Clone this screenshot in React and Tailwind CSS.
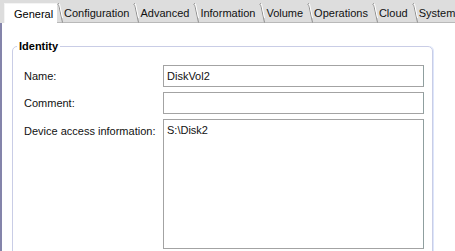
const TABS = ['Configuration', 'Advanced', 'Information', 'Volume', 'Operations', 'Cloud', 'System'];

function TabEdge() {
  return (
    <svg width="6" height="20" viewBox="0 0 6 20" className="shrink-0">
      <path d="M0.5 1.5 L1.5 0.5 L5.5 19.5" fill="none" stroke="#8c8c8c" strokeWidth="1" />
      <path d="M1.5 1.5 L2.5 1 L5.5 15" fill="none" stroke="#ffffff" strokeWidth="1" />
    </svg>
  );
}

function Field({ label, value, tall }) {
  return (
    <div className="flex items-start">
      <div className={`w-[139px] shrink-0 ${tall ? 'pt-[5px]' : 'pt-[4px]'}`}>{label}</div>
      <div
        className={`w-[261px] border border-[#a3a3a3] border-r-[#8f9f9f] bg-white px-[3px] pt-[3px] ${tall ? 'h-[130px]' : 'h-[22px]'}`}
      >
        {value}
      </div>
    </div>
  );
}

export default function App() {
  return (
    <div className="w-[455px] h-[251px] overflow-hidden bg-white text-[11px] leading-[14px] text-[#111] font-['Liberation_Sans',Arial,sans-serif]">
      {/* Tab strip */}
      <div className="h-[23px] bg-[#dddddd] flex items-end pl-[4px]">
        <div className="h-[20px] w-[53px] shrink-0 bg-white border-l border-t border-[#f4f4f4] flex items-center pl-[9px] text-black">
          General
        </div>
        {TABS.map((t) => (
          <div key={t} className="h-[20px] shrink-0 flex items-start border-b border-[#b9b9b9]">
            <TabEdge />
            <span className="pt-[3px] pl-[1px] pr-[4px] whitespace-nowrap">{t}</span>
          </div>
        ))}
      </div>

      {/* Page */}
      <div className="h-[228px] border-l-2 border-[#8484aa] pl-[10px] pr-[22px] pt-[16px]">
        <fieldset className="h-[240px] border border-[#c9cde6] rounded-[5px] pl-[11px] pt-[12px] shadow-[1px_0_0_#dde6fb]">
          <legend className="font-bold ml-[-7px] pl-[2px] pr-[2px] text-black">Identity</legend>
          <div className="flex flex-col gap-[5px]">
            <Field label="Name:" value="DiskVol2" />
            <Field label="Comment:" value="" />
            <Field label="Device access information:" value="S:\Disk2" tall />
          </div>
        </fieldset>
      </div>
    </div>
  );
}
